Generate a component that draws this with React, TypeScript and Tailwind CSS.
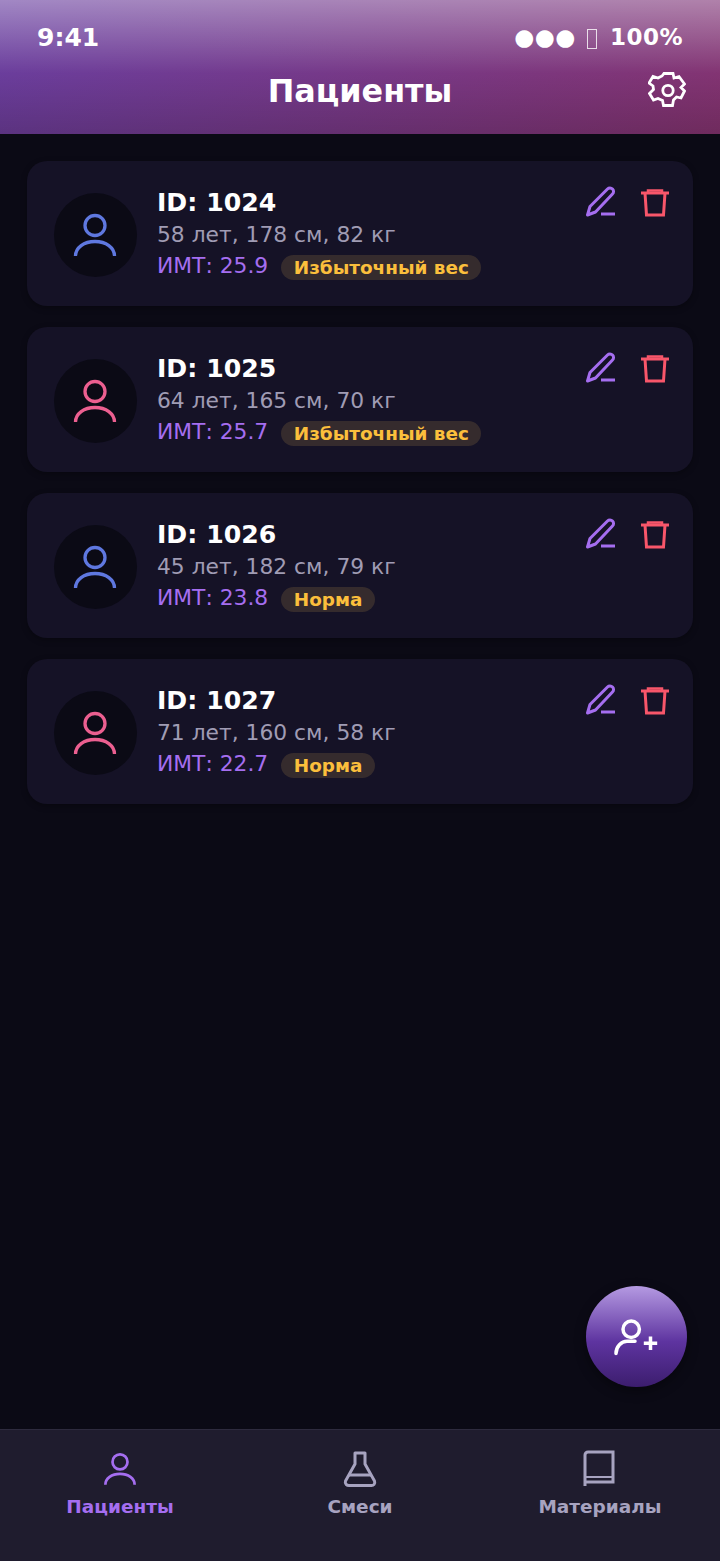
const FONT = "font-['DejaVu_Sans',sans-serif]"

const patients = [
  { id: 1024, info: '58 лет, 178 см, 82 кг', bmi: '25.9', tag: 'Избыточный вес', color: '#5f78e0' },
  { id: 1025, info: '64 лет, 165 см, 70 кг', bmi: '25.7', tag: 'Избыточный вес', color: '#ec5f90' },
  { id: 1026, info: '45 лет, 182 см, 79 кг', bmi: '23.8', tag: 'Норма', color: '#5f78e0' },
  { id: 1027, info: '71 лет, 160 см, 58 кг', bmi: '22.7', tag: 'Норма', color: '#ec5f90' },
]

function PersonIcon({ color, size = 48, width = 3.3 }: { color: string; size?: number; width?: number }) {
  return (
    <svg width={size} height={size} viewBox="0 0 48 48" fill="none" stroke={color} strokeWidth={width}>
      <circle cx="24" cy="14.5" r="10" />
      <path d="M4.500 45c0-8.500 8.500-14.500 19.500-14.500S43.500 36.500 43.500 45" />
    </svg>
  )
}

function PencilIcon() {
  return (
    <svg width="34" height="34" viewBox="0 0 34 34" fill="none" stroke="#a56ef0" strokeWidth="3">
      <path d="M3.500 30l2.500-8.500L23.500 4a3.500 3.500 0 0 1 5 0 3.500 3.500 0 0 1 0 5L11.500 27z" strokeLinejoin="round" />
      <path d="M17 29h14" />
    </svg>
  )
}

function TrashIcon() {
  return (
    <svg width="30" height="30" viewBox="0 0 30 30" fill="none" stroke="#f8566a" strokeWidth="3">
      <path d="M1 6h28" />
      <path d="M8 6V3.500h14V6" strokeWidth="2.500" />
      <path d="M5 6l1.500 22h17L25 6" />
    </svg>
  )
}

function GearIcon() {
  return (
    <svg width="38" height="38" viewBox="0 0 38 38" fill="none" stroke="#fff" strokeWidth="2.800" strokeLinejoin="miter">
      <path d="M16 2.500h9l1 4.500 5-1.500 5.500 7.500-3.500 3.500 3.500 3.500-3.500 7-4.500-1-3 3-1 5.500h-9l-1-5-4.500-2-4.500 1.500-4-6.500 4-4-.5-3.500-4-3 4-6.500 5 1.500 4-2z" />
      <circle cx="20" cy="19.500" r="5.200" />
    </svg>
  )
}

function FlaskIcon() {
  return (
    <svg width="34" height="38" viewBox="0 0 34 38" fill="none" stroke="#a7a3c0" strokeWidth="3" strokeLinejoin="round">
      <path d="M12 3h10v11l9.500 17c1 3-1 4.500-3 4.500H6c-2 0-4.500-1.500-3.500-4.500L12 14z" />
      <path d="M6 25h22" />
    </svg>
  )
}

function BookIcon() {
  return (
    <svg width="34" height="38" viewBox="0 0 34 38" fill="none" stroke="#a7a3c0" strokeWidth="3">
      <path d="M2 36V5a3 3 0 0 1 3-3h25v30H2" />
      <path d="M2 27h28" strokeWidth="2" />
    </svg>
  )
}

function PatientCard({ p }: { p: (typeof patients)[number] }) {
  return (
    <div className="relative flex h-[145px] gap-[20px] rounded-[20px] bg-[#151226] pl-[26.500px] pt-[32px] shadow-[0_2px_6px_rgba(0,0,0,0.3)]">
      <div className="flex h-[83.500px] w-[83.500px] shrink-0 items-center justify-center rounded-full bg-[#0b0a15]">
        <PersonIcon color={p.color} />
      </div>
      <div className="-mt-[7px] flex flex-col">
        <div className="text-[25.200px] leading-[33px] font-bold text-white">ID: {p.id}</div>
        <div className="text-[21.800px] leading-[32px] text-[#a09cb4]">{p.info}</div>
        <div className="-mt-[1px] flex items-center text-[21.800px] leading-[31px] text-[#a56ef0]">
          ИМТ: {p.bmi}
          <span className="mt-[3px] ml-[13px] rounded-full bg-[#352b2d] px-[12.500px] text-[18.400px] leading-[25px] font-bold text-[#fbbf3c]">{p.tag}</span>
        </div>
      </div>
      <div className="absolute right-[23px] top-[24px] flex items-center gap-[22.500px]">
        <PencilIcon />
        <TrashIcon />
      </div>
    </div>
  )
}

function NavItem({ icon, label, active }: { icon: React.ReactNode; label: string; active?: boolean }) {
  return (
    <div className="flex flex-1 flex-col items-center">
      <div className="flex h-[38px] items-center">{icon}</div>
      <div className={`mt-[7px] text-[18.500px] leading-[24px] font-bold ${active ? 'text-[#a56ef0]' : 'text-[#a7a3c0]'}`}>{label}</div>
    </div>
  )
}

export default function App() {
  return (
    <div className={`relative flex h-[1561px] w-[720px] flex-col overflow-hidden bg-[#0b0a15] ${FONT}`}>
      <header className="h-[134px] shrink-0 bg-[linear-gradient(135deg,#683ea0_0%,#84336f_100%)]">
        <div className="h-full bg-[linear-gradient(180deg,rgba(255,255,255,0.38)_0%,rgba(255,255,255,0)_55%,rgba(0,0,0,0.16)_100%)] px-[37px]">
          <div className="flex h-[76px] items-center justify-between pb-[1px] font-bold text-white">
            <span className="text-[25px]">9:41</span>
            <span className="flex items-center text-[23px] tracking-[0.5px]">
              ●●●
              <span className="mt-[2px] mr-[13px] ml-[11px] h-[20px] w-[10px] border border-white/80" />
              100%
            </span>
          </div>
          <div className="relative -mt-[1px] text-center text-[31.800px] leading-[32px] font-bold text-white">
            Пациенты
            <div className="absolute right-[-3px] top-[-4px]">
              <GearIcon />
            </div>
          </div>
        </div>
      </header>

      <main className="flex flex-1 flex-col gap-[21px] px-[27px] pt-[27px]">
        {patients.map((p) => (
          <PatientCard key={p.id} p={p} />
        ))}
      </main>

      <button className="absolute bottom-[174px] right-[33px] flex h-[101px] w-[101px] items-center justify-center rounded-full bg-[linear-gradient(180deg,#b59ae2_0%,#5e34a0_55%,#3c1d6e_100%)] shadow-[0_4px_12px_rgba(0,0,0,0.4)]">
        <svg width="48" height="42" viewBox="0 0 48 42" fill="none" stroke="#fff" strokeWidth="3.500">
          <circle cx="18.200" cy="13.300" r="8.200" />
          <path d="M3 37.500c0-7 5.500-12.300 11-12.300h8" strokeLinecap="round" />
          <path d="M37.500 20.500v13.500M30.800 27.200h13.400" />
        </svg>
      </button>

      <nav className="flex h-[132px] shrink-0 border-t border-[#2e2b3e] bg-[#1f1c2e] pt-[20px]">
        <NavItem active label="Пациенты" icon={<PersonIcon color="#a56ef0" size={36} width={3.600} />} />
        <NavItem label="Смеси" icon={<FlaskIcon />} />
        <NavItem label="Материалы" icon={<BookIcon />} />
      </nav>
    </div>
  )
}
